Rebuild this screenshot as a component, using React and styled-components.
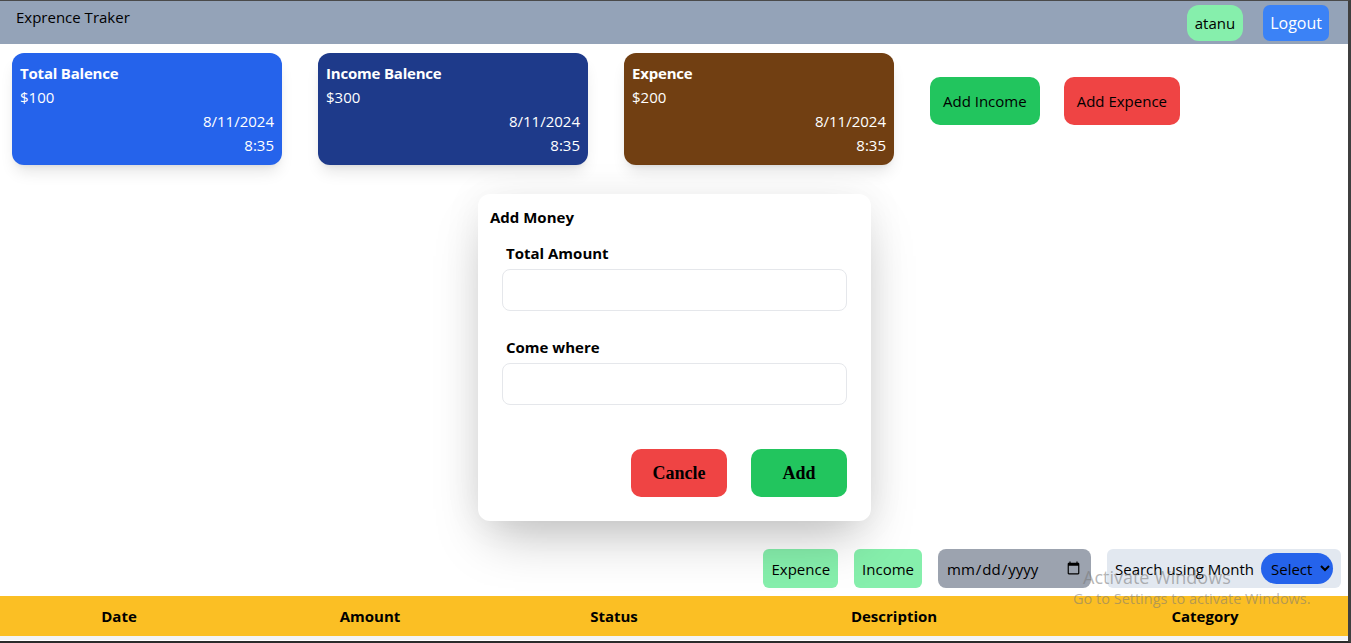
import React from "react";
import styled, { createGlobalStyle } from "styled-components";

const GlobalStyle = createGlobalStyle`
  * { box-sizing: border-box; }
  body {
    margin: 0;
    font-family: "Open Sans", "Noto Sans", sans-serif;
    color: #000;
    background: #fff;
  }
`;

const Frame = styled.div`
  position: relative;
  width: 1351px;
  height: 643px;
  overflow: hidden;
  border-top: 1px solid #4a4a4a;
  border-right: 3px solid #3f3f3f;
  border-bottom: 2px solid #2b2b2b;
`;

const Navbar = styled.nav`
  display: flex;
  justify-content: space-between;
  align-items: flex-start;
  height: 43px;
  padding: 4px 19px 0 16px;
  background-color: #94a3b8;
`;

const Brand = styled.div`
  font-size: 15px;
  line-height: 24px;
`;

const NavRight = styled.div`
  display: flex;
  align-items: center;
  gap: 20px;
`;

const UserPill = styled.div`
  display: flex;
  align-items: center;
  height: 36px;
  padding: 0 8px;
  border-radius: 12px;
  background-color: #86efac;
  font-size: 15px;
`;

const LogoutButton = styled.button`
  height: 36px;
  padding: 0 7px;
  border: none;
  border-radius: 7px;
  background-color: #3b82f6;
  color: #fff;
  font-family: inherit;
  font-size: 16px;
`;

const CardsRow = styled.section`
  display: flex;
  align-items: flex-start;
  gap: 36px;
  padding: 9px 0 0 12px;
`;

const Card = styled.div`
  display: flex;
  flex-direction: column;
  width: 270px;
  height: 112px;
  padding: 8px;
  border-radius: 12px;
  background-color: ${(p) => p.$bg};
  color: #fff;
  font-size: 15px;
  line-height: 24px;
  box-shadow: 0 10px 15px -3px rgba(0, 0, 0, 0.1), 0 4px 6px -4px rgba(0, 0, 0, 0.1);
`;

const CardTitle = styled.div`
  font-weight: 700;
  letter-spacing: -0.2px;
`;

const CardRight = styled.div`
  text-align: right;
`;

const ActionGroup = styled.div`
  display: flex;
  gap: 24px;
  margin-top: 24px;
`;

const ActionButton = styled.button`
  height: 48px;
  padding: 0 13px;
  border: none;
  border-radius: 10px;
  background-color: ${(p) => p.$bg};
  color: #000;
  font-family: inherit;
  font-size: 15px;
`;

const FilterRow = styled.div`
  display: flex;
  justify-content: flex-end;
  align-items: center;
  gap: 16px;
  margin-top: 384px;
  padding-right: 7px;
  height: 39px;
`;

const TypeButton = styled.button`
  height: 39px;
  padding: 0 8px;
  border: none;
  border-radius: 6px;
  background-color: #86efac;
  color: #000;
  font-family: inherit;
  font-size: 15px;
`;

const DateInput = styled.input`
  width: 153px;
  height: 39px;
  padding: 0 8px;
  border: none;
  border-radius: 8px;
  background-color: #9ca3af;
  color: #000;
  font-family: inherit;
  font-size: 15px;
`;

const SearchBox = styled.div`
  display: flex;
  align-items: center;
  width: 234px;
  height: 39px;
  padding: 0 8px;
  border-radius: 6px;
  background-color: #e2e8f0;
  font-size: 15px;
`;

const MonthSelect = styled.select`
  width: 72px;
  height: 31px;
  margin-left: auto;
  padding: 0 4px 0 6px;
  border: none;
  border-radius: 9999px;
  background-color: #2563eb;
  color: #000;
  font-family: inherit;
  font-size: 15px;
`;

const TableHeader = styled.div`
  display: grid;
  grid-template-columns: 238px 264px 224px 336px 1fr;
  align-items: center;
  height: 40px;
  margin-top: 8px;
  background-color: #fbbf24;
  border-bottom: 4px solid #f3f4f6;
  box-sizing: content-box;
`;

const HeadCell = styled.div`
  text-align: center;
  font-weight: 700;
  font-size: 15px;
`;

const Modal = styled.div`
  position: absolute;
  top: 193px;
  left: 478px;
  width: 393px;
  height: 327px;
  display: flex;
  flex-direction: column;
  padding: 11px 24px 24px;
  border-radius: 12px;
  background-color: #fff;
  box-shadow: 0 25px 50px -12px rgba(0, 0, 0, 0.25), 0 0 40px rgba(0, 0, 0, 0.06);
`;

const ModalTitle = styled.h3`
  margin: 0 0 12px -12px;
  font-size: 15px;
  line-height: 24px;
  font-weight: 700;
`;

const Field = styled.div`
  display: flex;
  flex-direction: column;
  gap: 4px;
  margin-bottom: 24px;
`;

const FieldLabel = styled.label`
  padding-left: 4px;
  font-size: 15px;
  line-height: 24px;
  font-weight: 700;
`;

const TextInput = styled.input`
  height: 42px;
  border: 1px solid #e5e7eb;
  border-radius: 8px;
  padding: 0 8px;
  font-family: inherit;
  font-size: 15px;
`;

const ModalActions = styled.div`
  display: flex;
  justify-content: flex-end;
  gap: 24px;
  margin-top: auto;
`;

const ModalButton = styled.button`
  width: 96px;
  height: 48px;
  border: none;
  border-radius: 10px;
  background-color: ${(p) => p.$bg};
  color: #000;
  font-family: "Liberation Serif", serif;
  font-weight: 700;
  font-size: 18px;
`;

const Watermark = styled.div`
  position: absolute;
  left: 1073px;
  top: 564px;
  color: rgba(120, 120, 120, 0.55);
  pointer-events: none;
`;

const WatermarkTitle = styled.div`
  font-size: 18px;
  line-height: 24px;
  padding-left: 10px;
`;

const WatermarkSub = styled.div`
  font-size: 14.5px;
  line-height: 20px;
`;

const cards = [
  { title: "Total Balence", amount: "$100", bg: "#2563eb" },
  { title: "Income Balence", amount: "$300", bg: "#1e3a8a" },
  { title: "Expence", amount: "$200", bg: "#713f12" },
];

const columns = ["Date", "Amount", "Status", "Description", "Category"];

export default function App() {
  return (
    <>
      <GlobalStyle />
      <Frame>
        <Navbar>
          <Brand>Exprence Traker</Brand>
          <NavRight>
            <UserPill>atanu</UserPill>
            <LogoutButton>Logout</LogoutButton>
          </NavRight>
        </Navbar>

        <CardsRow>
          {cards.map((c) => (
            <Card key={c.title} $bg={c.bg}>
              <CardTitle>{c.title}</CardTitle>
              <div>{c.amount}</div>
              <CardRight>8/11/2024</CardRight>
              <CardRight>8:35</CardRight>
            </Card>
          ))}
          <ActionGroup>
            <ActionButton $bg="#22c55e">Add Income</ActionButton>
            <ActionButton $bg="#ef4444">Add Expence</ActionButton>
          </ActionGroup>
        </CardsRow>

        <FilterRow>
          <TypeButton>Expence</TypeButton>
          <TypeButton>Income</TypeButton>
          <DateInput type="date" />
          <SearchBox>
            Search using Month
            <MonthSelect defaultValue="">
              <option value="">Select</option>
            </MonthSelect>
          </SearchBox>
        </FilterRow>

        <TableHeader>
          {columns.map((col) => (
            <HeadCell key={col}>{col}</HeadCell>
          ))}
        </TableHeader>

        <Modal>
          <ModalTitle>Add Money</ModalTitle>
          <Field>
            <FieldLabel>Total Amount</FieldLabel>
            <TextInput type="text" />
          </Field>
          <Field>
            <FieldLabel>Come where</FieldLabel>
            <TextInput type="text" />
          </Field>
          <ModalActions>
            <ModalButton $bg="#ef4444">Cancle</ModalButton>
            <ModalButton $bg="#22c55e">Add</ModalButton>
          </ModalActions>
        </Modal>

        <Watermark>
          <WatermarkTitle>Activate Windows</WatermarkTitle>
          <WatermarkSub>Go to Settings to activate Windows.</WatermarkSub>
        </Watermark>
      </Frame>
    </>
  );
}
